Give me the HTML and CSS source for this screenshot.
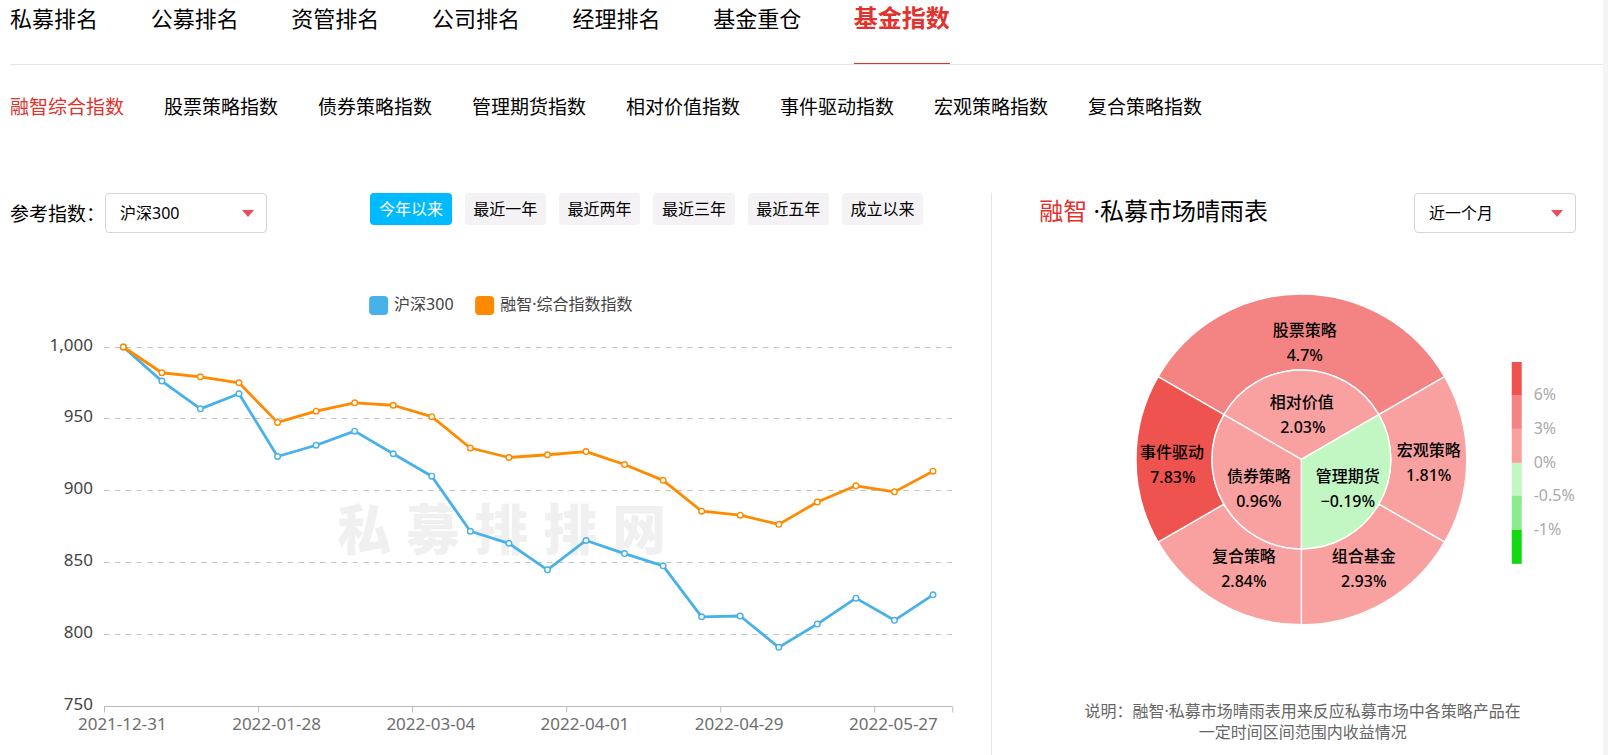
FILE: index.html
```html
<!DOCTYPE html>
<html lang="zh-CN">
<head>
<meta charset="utf-8">
<title>基金指数</title>
<link rel="stylesheet" href="styles.css">
</head>
<body>
<main class="page">
  <header class="topbar">
    <nav class="tabs">
      <a class="tab" href="#">私募排名</a>
      <a class="tab" href="#">公募排名</a>
      <a class="tab" href="#">资管排名</a>
      <a class="tab" href="#">公司排名</a>
      <a class="tab" href="#">经理排名</a>
      <a class="tab" href="#">基金重仓</a>
      <a class="tab tab-active" href="#">基金指数</a>
    </nav>
  </header>
  <nav class="subtabs">
    <a class="subtab subtab-active" href="#">融智综合指数</a>
    <a class="subtab" href="#">股票策略指数</a>
    <a class="subtab" href="#">债券策略指数</a>
    <a class="subtab" href="#">管理期货指数</a>
    <a class="subtab" href="#">相对价值指数</a>
    <a class="subtab" href="#">事件驱动指数</a>
    <a class="subtab" href="#">宏观策略指数</a>
    <a class="subtab" href="#">复合策略指数</a>
  </nav>

  <div class="panels">
    <section class="trend">
      <div class="trend-controls">
        <label class="field-label" for="benchmark">参考指数：</label>
        <div class="select-box">
          <select class="select" id="benchmark"><option>沪深300</option></select>
          <svg class="caret" viewBox="0 0 12 7" aria-hidden="true"><path d="M0 0H12L6 7Z"/></svg>
        </div>
        <div class="ranges">
          <button class="range range-active" type="button">今年以来</button>
          <button class="range" type="button">最近一年</button>
          <button class="range" type="button">最近两年</button>
          <button class="range" type="button">最近三年</button>
          <button class="range" type="button">最近五年</button>
          <button class="range" type="button">成立以来</button>
        </div>
      </div>
      <svg class="chart" viewBox="0 0 981 450" role="img" aria-label="指数走势">
        <g class="legend">
          <rect class="fill-blue" x="359" y="6" width="19" height="19" rx="4"/>
          <text x="384" y="20">沪深300</text>
          <rect class="fill-orange" x="465" y="6" width="19" height="19" rx="4"/>
          <text x="490" y="20">融智·综合指数指数</text>
        </g>
        <text class="watermark" x="327 396 464 533 602" y="260">私募排排网</text>
        <g id="plot"></g>
      </svg>
    </section>

    <section class="barometer">
      <div class="barometer-head">
        <h2 class="title"><span class="title-brand">融智</span> ·私募市场晴雨表</h2>
        <div class="select-box">
          <select class="select" aria-label="时间区间"><option>近一个月</option></select>
          <svg class="caret" viewBox="0 0 12 7" aria-hidden="true"><path d="M0 0H12L6 7Z"/></svg>
        </div>
      </div>
      <svg class="wheel" viewBox="0 0 547 350" role="img" aria-label="私募市场晴雨表">
        <g id="sectors" class="sectors" transform="translate(272.5 169.5)"></g>
        <g class="sector-labels">
          <text x="276" y="46">股票策略</text><text x="276" y="71">4.7%</text>
          <text x="273" y="118">相对价值</text><text x="274" y="143">2.03%</text>
          <text x="143" y="168">事件驱动</text><text x="144" y="193">7.83%</text>
          <text x="230" y="192">债券策略</text><text x="230" y="217">0.96%</text>
          <text x="319" y="192">管理期货</text><text x="319" y="217">−0.19%</text>
          <text x="400" y="166">宏观策略</text><text x="400" y="191">1.81%</text>
          <text x="215" y="272">复合策略</text><text x="215" y="297">2.84%</text>
          <text x="335" y="272">组合基金</text><text x="335" y="297">2.93%</text>
        </g>
        <g>
          <rect class="s-high" x="483" y="72" width="10" height="34"/>
          <rect class="s-mid" x="483" y="105" width="10" height="34"/>
          <rect class="s-low" x="483" y="139" width="10" height="34"/>
          <rect class="s-neg" x="483" y="173" width="10" height="34"/>
          <rect class="s-neg2" x="483" y="206" width="10" height="34"/>
          <rect class="s-neg3" x="483" y="240" width="10" height="34"/>
        </g>
        <g class="scale-labels">
          <text x="505" y="110">6%</text>
          <text x="505" y="144">3%</text>
          <text x="505" y="178">0%</text>
          <text x="505" y="211">-0.5%</text>
          <text x="505" y="245">-1%</text>
        </g>
      </svg>
      <p class="note">说明：融智·私募市场晴雨表用来反应私募市场中各策略产品在一定时间区间范围内收益情况</p>
    </section>
  </div>
</main>
<script src="charts.js"></script>
</body>
</html>
```
FILE: styles.css
```css
* {
  box-sizing: border-box;
}

body {
  margin: 0;
  background: #f5f5f5;
  color: #000;
  font-family: "Noto Sans", "Noto Sans CJK SC", sans-serif;
  font-size: 16px;
}

a {
  color: inherit;
  text-decoration: none;
}

.page {
  display: flex;
  flex-direction: column;
  min-height: 100vh;
  margin-right: 5px;
  padding-left: 10px;
  background: #fff;
}

.topbar {
  border-bottom: 1px solid #e6e6e6;
}

.tabs {
  display: flex;
  justify-content: space-between;
  width: 59%;
}

.tab {
  height: 64px;
  font-size: 22px;
  line-height: 36px;
  white-space: nowrap;
}

.tab-active {
  border-bottom: 1px solid #e1322d;
  color: #e1322d;
  font-size: 24px;
  font-weight: 700;
}

.subtabs {
  display: flex;
  gap: 40px;
  padding: 28px 0 72px;
}

.subtab {
  font-size: 19px;
  line-height: 28px;
  white-space: nowrap;
}

.subtab-active {
  color: #e1322d;
}

.panels {
  display: grid;
  flex: 1;
  grid-template-columns: minmax(0, 1fr) 38.4%;
}

.trend-controls {
  display: flex;
  align-items: flex-start;
  padding-right: 68px;
}

.field-label {
  font-size: 19px;
  line-height: 42px;
  white-space: nowrap;
}

.select-box {
  position: relative;
  width: 162px;
}

.select {
  width: 100%;
  height: 40px;
  padding: 0 30px 0 14px;
  border: 1px solid #d5d5d5;
  border-radius: 4px;
  appearance: none;
  background: #fff;
  color: #000;
  font: inherit;
}

.caret {
  position: absolute;
  top: 17px;
  right: 13px;
  width: 12px;
  height: 7px;
  fill: #ee4c5b;
  pointer-events: none;
}

.ranges {
  display: flex;
  gap: 13px;
  width: 553px;
  margin-left: auto;
}

.range {
  flex: 1;
  height: 32px;
  padding: 0 0 2px;
  border: 0;
  border-radius: 4px;
  background: #f4f2f4;
  color: #000;
  font: inherit;
  white-space: nowrap;
}

.range-active {
  background: #00baff;
  color: #fff;
}

.chart {
  display: block;
  width: 100%;
  margin-top: 55px;
}

.legend {
  fill: #444;
}

.fill-blue {
  fill: #48b1ea;
}

.fill-orange {
  fill: #ff8a00;
}

.watermark {
  fill: #f0f0f0;
  font-size: 54px;
  font-weight: 900;
}

.gridline {
  stroke: #c4c4c4;
  stroke-dasharray: 5.4 5.4;
}

.axis {
  stroke: #bbb;
}

.y-label {
  fill: #444;
  font-size: 17px;
  text-anchor: end;
}

.x-label {
  fill: #6e6e6e;
  font-size: 17px;
  text-anchor: middle;
}

.series {
  fill: none;
  stroke-width: 2.8;
  stroke-linejoin: bevel;
}

.dot {
  fill: #fff;
  stroke-width: 1.4;
}

.blue {
  stroke: #48b1ea;
}

.orange {
  stroke: #ff8a00;
}

.barometer {
  padding: 0 27px 0 37px;
  border-left: 1px solid #e6e6e6;
}

.barometer-head {
  display: flex;
  justify-content: space-between;
}

.title {
  margin: 0;
  padding-left: 10px;
  font-size: 24px;
  font-weight: 400;
  line-height: 36px;
  white-space: nowrap;
}

.title-brand {
  color: #e1322d;
}

.wheel {
  display: block;
  width: 100%;
  margin-top: 57px;
  overflow: visible;
}

.sectors {
  stroke: #fff;
  stroke-width: 1.4;
}

.s-high {
  fill: #ef534f;
}

.s-mid {
  fill: #f48483;
}

.s-low {
  fill: #f9a1a1;
}

.s-neg {
  fill: #c2f6c3;
}

.s-neg2 {
  fill: #8ceb8c;
}

.s-neg3 {
  fill: #12d912;
}

.sector-labels {
  fill: #000;
  font-weight: 500;
  text-anchor: middle;
}

.scale-labels {
  fill: #aaa;
}

.note {
  max-width: 448px;
  margin: 61px auto 0;
  color: #666;
  line-height: 21px;
  text-align: center;
}
```
FILE: charts.js
```js
const NS = "http://www.w3.org/2000/svg";

function add(parent, tag, attrs, text) {
  const el = document.createElementNS(NS, tag);
  for (const key in attrs) el.setAttribute(key, attrs[key]);
  if (text !== undefined) el.textContent = text;
  parent.appendChild(el);
}

/* Trend chart */
const plot = document.getElementById("plot");
const left = 94, right = 942, top0 = 57, bottom = 416.5;
const csi = [1000, 976.3, 957, 967.5, 923.9, 931.7, 941.5, 925.8, 910.2, 871.9, 863.5,
  845.1, 865.5, 856.4, 847.9, 812.4, 813, 791.2, 807.4, 825.4, 810, 827.7];
const rongzhi = [1000, 982.1, 979.3, 975.1, 947.6, 955.4, 961.2, 959.5, 951.6, 929.8, 923.2,
  925.1, 927.3, 918.3, 907.3, 885.9, 883.1, 876.7, 892.2, 903.5, 899.3, 913.7];
const dates = ["2021-12-31", "2022-01-28", "2022-03-04", "2022-04-01", "2022-04-29", "2022-05-27"];
const step = (right - left) / csi.length;
const px = i => left + step * (i + 0.5);
const py = v => top0 + (1000 - v) / 250 * (bottom - top0);

for (let v = 1000; v >= 750; v -= 50) {
  const y = Math.floor(py(v)) + 0.5;
  add(plot, "line", { class: v === 750 ? "axis" : "gridline", x1: left, x2: right, y1: y, y2: y });
  add(plot, "text", { class: "y-label", x: 83, y: y + 3.5 }, v.toLocaleString("en-US"));
}
dates.forEach((date, k) => {
  const x = Math.floor(left + step * 4 * k) + 0.5;
  add(plot, "line", { class: "axis", x1: x, x2: x, y1: bottom, y2: bottom + 6 });
  add(plot, "text", { class: "x-label", x: px(4 * k) - 1, y: 440 }, date);
});
add(plot, "line", { class: "axis", x1: right + 0.5, x2: right + 0.5, y1: bottom, y2: bottom + 6 });

[["blue", csi], ["orange", rongzhi]].forEach(([name, values]) => {
  add(plot, "polyline", { class: "series " + name, points: values.map((v, i) => px(i) + "," + py(v)).join(" ") });
  values.forEach((v, i) => add(plot, "circle", { class: "dot " + name, cx: px(i), cy: py(v), r: 2.8 }));
});

/* Barometer wheel: start and end angles run clockwise from twelve o'clock */
const sectors = document.getElementById("sectors");
function sector(name, from, to, inner, outer) {
  const at = (deg, r) => {
    const a = deg * Math.PI / 180;
    return (r * Math.sin(a)).toFixed(2) + " " + (-r * Math.cos(a)).toFixed(2);
  };
  add(sectors, "path", {
    class: name,
    d: `M${at(from, inner)}L${at(from, outer)}A${outer} ${outer} 0 0 1 ${at(to, outer)}L${at(to, inner)}` +
      (inner ? `A${inner} ${inner} 0 0 0 ${at(from, inner)}Z` : "Z")
  });
}
sector("s-mid", -60, 60, 89.5, 165.5);
sector("s-low", 60, 120, 89.5, 165.5);
sector("s-low", 120, 180, 89.5, 165.5);
sector("s-low", 180, 240, 89.5, 165.5);
sector("s-high", 240, 300, 89.5, 165.5);
sector("s-low", -60, 60, 0, 89.5);
sector("s-neg", 60, 180, 0, 89.5);
sector("s-low", 180, 300, 0, 89.5);
```
